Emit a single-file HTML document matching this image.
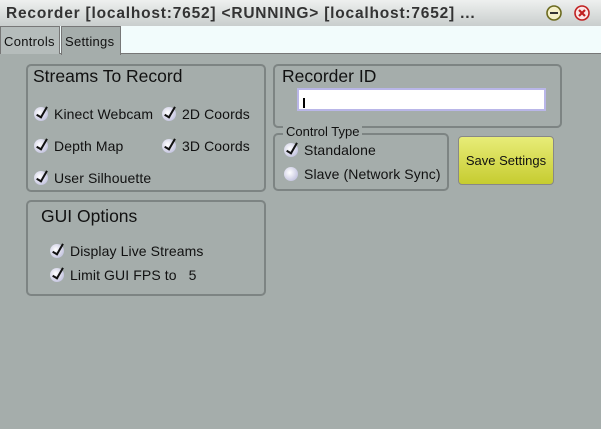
<!DOCTYPE html><html><head><style>
*{margin:0;padding:0;box-sizing:border-box}
body{width:601px;height:429px;overflow:hidden;background:#a5adab;font-family:"Liberation Sans",sans-serif;position:relative;color:#111}
.a{position:absolute}
.title{left:0;top:0;width:601px;height:26px;background:linear-gradient(#eef0ef,#c9cecd);font-weight:bold;font-size:15.5px;color:#333;padding:5px 0 0 6px;letter-spacing:0.8px}
.tabs{left:0;top:26px;width:601px;height:28px;background:#f2fcfc;border-bottom:1px solid #777}
.tab{top:26px;height:28px;font-size:13px;padding:7px 3px 0 3px;border:1px solid #777;border-bottom:none}
.box{border:2px solid #7d8483;border-radius:5px}
.h{font-size:17.5px}
.cb{font-size:14px;white-space:nowrap;letter-spacing:0.1px}
.cb i{display:inline-block;width:14px;height:14px;border-radius:50%;background:radial-gradient(circle at 40% 40%,#fff,#b0b0d4);vertical-align:-2px;margin-right:6px;position:relative}
.cb i:after{content:"";position:absolute;top:-2px;left:5px;width:4px;height:11px;border:solid #111;border-width:0 2.5px 2.5px 0;transform:rotate(30deg)}
.r:after{display:none}
</style></head><body>
<div class="a title">Recorder [localhost:7652] &lt;RUNNING&gt; [localhost:7652] ...</div>
<svg class="a" style="left:545px;top:4px" width="18" height="18"><circle cx="9" cy="9" r="7" fill="#f4f0c8" stroke="#6b6a1e" stroke-width="1.6"/><line x1="5" y1="9" x2="13" y2="9" stroke="#333" stroke-width="2"/></svg>
<svg class="a" style="left:573px;top:4px" width="18" height="18"><circle cx="9" cy="9" r="7" fill="#fbe6e6" stroke="#c02020" stroke-width="1.6"/><path d="M6 6L12 12M12 6L6 12" stroke="#c02020" stroke-width="2.2"/></svg>
<div class="a tabs"></div>
<div class="a tab" style="left:0;width:60px;background:#b5bcbb;letter-spacing:0.3px">Controls</div>
<div class="a tab" style="left:61px;width:60px;background:#a5adab;height:29px;letter-spacing:0.3px">Settings</div>

<div class="a box" style="left:26px;top:64px;width:240px;height:128px"></div>
<div class="a h" style="left:33px;top:66px">Streams To Record</div>
<div class="a cb" style="left:34px;top:106px"><i></i>Kinect Webcam</div>
<div class="a cb" style="left:162px;top:106px"><i></i>2D Coords</div>
<div class="a cb" style="left:34px;top:138px"><i></i>Depth Map</div>
<div class="a cb" style="left:162px;top:138px"><i></i>3D Coords</div>
<div class="a cb" style="left:34px;top:170px"><i></i>User Silhouette</div>

<div class="a box" style="left:26px;top:200px;width:240px;height:96px"></div>
<div class="a h" style="left:41px;top:206px">GUI Options</div>
<div class="a cb" style="left:50px;top:243px"><i></i>Display Live Streams</div>
<div class="a cb" style="left:50px;top:267px"><i></i>Limit GUI FPS to &nbsp;&nbsp;5</div>

<div class="a box" style="left:273px;top:64px;width:289px;height:64px"></div>
<div class="a h" style="left:282px;top:66px">Recorder ID</div>
<div class="a" style="left:297px;top:88px;width:249px;height:23px;background:#fff;border:2px solid #b9b6e8"><div class="a" style="left:4px;top:8px;width:2px;height:10px;background:#000"></div></div>

<div class="a box" style="left:273px;top:133px;width:176px;height:58px;border-width:2px"></div>
<div class="a" style="left:283px;top:124px;font-size:13px;background:#a5adab;padding:0 3px">Control Type</div>
<div class="a cb" style="left:284px;top:142px"><i></i>Standalone</div>
<div class="a cb" style="left:284px;top:166px"><i class="r"></i>Slave (Network Sync)</div>
<div class="a" style="left:458px;top:136px;width:96px;height:49px;border:1px solid #888;border-radius:4px;background:linear-gradient(#e8ec78,#c6cc30);font-size:13px;text-align:center;padding-top:16px">Save Settings</div>
</body></html>
